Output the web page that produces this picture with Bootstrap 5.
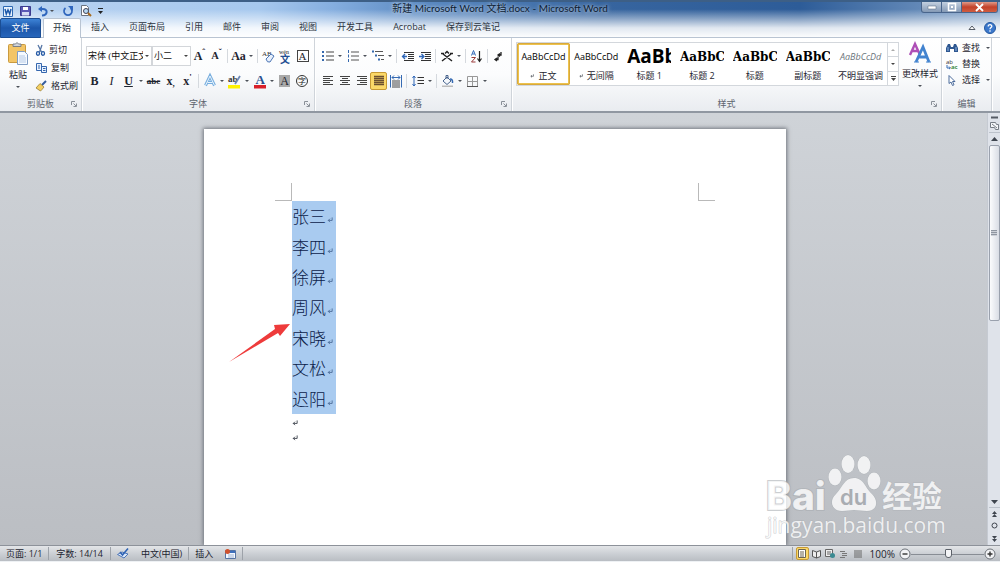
<!DOCTYPE html>
<html lang="zh-CN">
<head>
<meta charset="utf-8">
<meta name="viewport" content="width=device-width, initial-scale=1">
<title>新建 Microsoft Word 文档.docx - Microsoft Word</title>
<link href="https://cdn.jsdelivr.net/npm/bootstrap@5.3.0/dist/css/bootstrap.min.css" rel="stylesheet">
<style>
  body { font: 9px/12px "Open Sans", "Noto Sans CJK SC", sans-serif; color: #1e2530; }
  button { font: inherit; color: inherit; background: none; border: 0; padding: 0; line-height: 12px; white-space: nowrap; }
  svg { display: block; flex: none; overflow: visible; }
  .serif { font-family: "Liberation Serif", "Noto Sans CJK SC", serif; }

  /* title bar and tabs */
  .app-head { background: linear-gradient(#fff0 20%, #ffffff73 48%, #ffffffd9 72%, #fff), linear-gradient(90deg, #b9d3f1 0, #a6c8ee 26%, #86afe0 33%, #5b8ac2 42%, #37659f 60%, #2d5c98 80%, #86a6cc 100%); border-top: 2px solid #3d5f86; }
  .title-row { display: grid; grid-template-columns: 1fr auto 1fr; height: 16px; }
  .quick { padding-left: 3px; gap: 7px; }
  .doc-title { font: 10px/12px Lato, "Noto Sans CJK SC", sans-serif; color: #0e1d33; text-shadow: 0 0 5px #fff9, 0 0 3px #fff6; }
  .win-btns { height: 11px; margin-right: 2px; border: 1px solid #49658c; border-top: 0; border-radius: 0 0 3px 3px; overflow: hidden; background: linear-gradient(#c3d0e0, #8499b5); }
  .win-btns button { width: 20px; height: 10px; border-right: 1px solid #49658c; display: flex; align-items: center; justify-content: center; }
  .win-btns button.close-btn { width: 35px; border: 0; background: linear-gradient(#e09a88, #c3412a 50%, #cf5d41); }
  .tabs { height: 20px; border-bottom: 1px solid #b9c4d2; }
  .tab { padding: 3px 10px; color: #2c3440; text-decoration: none; white-space: nowrap; height: 20px; }
  .tab.file { width: 41px; margin-right: 2px; text-align: center; padding: 3px 0; color: #fff; background: linear-gradient(#3d83d6, #1c56a9 50%, #2766bb); border: 1px solid #1b4e94; border-radius: 2px 2px 0 0; }
  .tab.on { background: #fff; border: 1px solid #b9c4d2; border-bottom: 0; border-radius: 2px 2px 0 0; padding: 3px 9px; }

  /* ribbon */
  .ribbon { height: 75px; background: linear-gradient(#fff, #fbfcfd 50%, #e9ecf0); border-bottom: 2px solid #9097a1; }
  .group { border-right: 1px solid #cfd4da; box-shadow: 1px 0 #fff; display: flex; flex-direction: column; justify-content: space-between; }
  .group-name { position: relative; text-align: center; color: #5d646e; height: 13px; }
  .group-name svg { position: absolute; right: 4px; top: 3px; }
  .clip-list { display: flex; flex-direction: column; gap: 6px; padding-top: 2px; }
  .tool-rows { display: flex; flex-direction: column; gap: 5px; padding: 8px 0 0 4px; }
  .tool-row { display: flex; align-items: center; height: 20px; }
  .tool { width: 17px; height: 18px; display: flex; align-items: center; justify-content: center; flex: none; font-size: 12px; }
  .tool.on { background: #fbd868; border: 1px solid #c79a35; border-radius: 2px; }
  .drop { width: 8px; height: 18px; display: flex; align-items: center; justify-content: center; flex: none; }
  .drop.low { height: 12px; }
  .drop::after, .tri::after { content: ""; border: 2px solid transparent; border-top: 2px solid #4c5159; border-bottom: 0; }
  .tri { display: flex; justify-content: center; align-items: center; height: 4px; }
  .rule { width: 5px; height: 14px; flex: none; background: linear-gradient(#d5d9de, #d5d9de) 2px 0 / 1px 100% no-repeat; }
  .combo { appearance: none; height: 20px; border: 1px solid #d3d6da; border-radius: 0; padding: 0 8px 0 1px; font-size: 9px; color: #111; line-height: 18px;
    background: #fff url("data:image/svg+xml,%3Csvg xmlns='http://www.w3.org/2000/svg' width='4' height='2'%3E%3Cpath d='M0 0h4L2 2z' fill='%23444'/%3E%3C/svg%3E") right 2px center no-repeat; }
  .boxed { border: 1px solid #444; width: 12px; height: 12px; line-height: 10px; font-size: 11px; text-align: center; }
  .shade { background: #a9a9a9; width: 11px; line-height: 12px; text-align: center; }
  .gallery { height: 44px; border: 1px solid #d3d7dc; background: #fff; }
  .style-item { flex: 1 1 0; min-width: 0; overflow: hidden; display: flex; flex-direction: column; align-items: center; justify-content: space-between; padding: 4px 3px 3px; }
  .style-item.on { border: 2px solid #ecc24e; outline: 1px solid #d9a93a; outline-offset: -1px; border-radius: 2px; padding: 2px 1px 1px; }
  .sample { font-size: 9px; line-height: 20px; height: 20px; width: 46px; white-space: nowrap; text-align: center; color: #000; }
  .sample.cut { text-align: left; width: 44px; overflow: hidden; }
  .sample.big { font: bold 19px/19px "Open Sans", sans-serif; }
  .sample.mid { font: bold 12px/21px "DejaVu Serif", serif; }
  .scroller { width: 11px; border-left: 1px solid #d3d7dc; }
  .scroller button { flex: 1; border-bottom: 1px solid #d3d7dc; display: flex; align-items: center; justify-content: center; }

  /* document area */
  .desk { background: linear-gradient(#cfd3d8, #bbbec3); min-height: 0; overflow: hidden; }
  .paper { width: 582px; margin-left: 3px; background: #fff; box-shadow: 0 0 4px 1px #70757d; padding: 54px 71px 0; }
  .corner { width: 17px; height: 18px; border: 0 solid #b9b9b9; border-bottom-width: 1px; }
  .corner.tl { border-right-width: 1px; }
  .corner.tr { border-left-width: 1px; }
  .names { width: 44px; height: 213px; margin-left: 17px; background: #a9cbf0; color: #0b2149; font: 17px/30px "Noto Sans CJK SC", sans-serif; font-weight: 300; }
  .names p, .blank { margin: 0; display: flex; align-items: center; gap: 1px; }
  .names p { flex: 1; }
  .names svg { color: #3f5f8c; }
  .blank { height: 15px; margin-left: 17px; padding-top: 3px; }
  .pointer { position: absolute; left: 24px; top: 195px; }
  .watermark { position: absolute; right: 41px; bottom: 2px; width: 180px; }
  .vbar { width: 13px; background: #dfe3ea; border-left: 1px solid #c5cad2; }
  .thumb { height: 176px; width: 11px; border: 1px solid #9aa1ad; border-radius: 2px; background: linear-gradient(90deg, #fbfcfd, #d9dde5); }
  .grip { width: 6px; height: 6px; background: repeating-linear-gradient(#8f96a1 0 1px, #cdd1d8 1px 2px); }

  /* status bar */
  .status { height: 17px; background: linear-gradient(#e3e5e8, #c8ccd1 60%, #b9bdc3); border-top: 1px solid #8d929a; border-bottom: 1px solid #eef1f4; }
  .cell { padding: 0 6px; height: 13px; line-height: 13px; border-right: 1px solid #9da2a9; display: flex; align-items: center; }
  .cell.count { padding: 0 7px; }
  .views { border-left: 1px solid #9da2a9; padding: 0 1px 0 3px; gap: 1px; }
  .view { width: 13px; height: 13px; display: flex; align-items: center; justify-content: center; }
  .view.on { background: #fbd868; border: 1px solid #c79a35; border-radius: 2px; }
  .zoom { appearance: none; width: 73px; height: 12px; margin: 0; background: linear-gradient(#888d94, #888d94) 0 6px / 100% 1px no-repeat; }
  .zoom::-webkit-slider-thumb { appearance: none; width: 7px; height: 9px; background: #f3f4f6; border: 1px solid #5c6169; border-radius: 1px 1px 3px 3px; }
</style>
</head>
<body class="vh-100 d-flex flex-column overflow-hidden">

<svg width="0" height="0" class="position-absolute" aria-hidden="true">
  <symbol id="launch" viewBox="0 0 6 6"><path d="M.5 4V.5H4M2.500 2.500 5 5M5.500 2.500v3h-3" fill="none" stroke="#8a9098"/></symbol>
  <symbol id="ret" viewBox="0 0 7 7"><path d="M6 .5v3.500H1.500M3.500 2 1.500 4l2 2" fill="none" stroke="currentColor" stroke-width=".9"/></symbol>
  <symbol id="list" viewBox="0 0 12 12"><path d="M4 2h8M4 6h8M4 10h8" stroke="#444"/><path d="M0 2h2M0 6h2M0 10h2" stroke="#3568ad" stroke-width="2"/></symbol>
  <symbol id="left" viewBox="0 0 12 12"><path d="M1 1.500h10M1 3.500h7M1 5.500h10M1 7.500h7M1 9.500h10" stroke="#444"/></symbol>
  <symbol id="center" viewBox="0 0 12 12"><path d="M1 1.500h10M3 3.500h6M1 5.500h10M3 7.500h6M1 9.500h10" stroke="#444"/></symbol>
  <symbol id="right" viewBox="0 0 12 12"><path d="M1 1.500h10M4 3.500h7M1 5.500h10M4 7.500h7M1 9.500h10" stroke="#444"/></symbol>
  <symbol id="full" viewBox="0 0 12 12"><path d="M1 1.500h10M1 3.500h10M1 5.500h10M1 7.500h10M1 9.500h10" stroke="#6b4f30" stroke-width="1.600"/></symbol>
</svg>

<header class="app-head flex-shrink-0">
  <div class="title-row">
    <div class="d-flex align-items-center quick">
      <svg width="10" height="11" viewBox="0 0 10 11"><path d="M.5.500h9v10h-9z" fill="#e9f2fc" stroke="#2e69b3"/><path d="m2 3 1.300 5L5 4l1.700 4L8 3" fill="none" stroke="#1c58aa" stroke-width="1.500"/></svg>
      <button title="保存"><svg width="11" height="10" viewBox="0 0 11 10"><path d="M.5.500h10v9h-10z" fill="#5b59b5" stroke="#3c3b8d"/><path d="M3 1h5v3H3z" fill="#fff"/><path d="M2 6h7v3.500H2z" fill="#d4dcf4"/></svg></button>
      <button title="撤消" class="d-flex align-items-center"><svg width="10" height="10" viewBox="0 0 10 10"><path d="M4 9.500C10 9 10 3 5 3H2" fill="none" stroke="#2f66bd" stroke-width="2"/><path d="M4 0v6L0 3z" fill="#2f66bd"/></svg><span class="drop"></span></button>
      <button title="重复"><svg width="10" height="10" viewBox="0 0 10 10"><path d="M2.500 2a4 4 0 1 0 5 0" fill="none" stroke="#2f66bd" stroke-width="1.700"/><path d="M5 0h5v5z" fill="#2f66bd"/></svg></button>
      <button title="打印预览"><svg width="11" height="12" viewBox="0 0 11 12"><path d="M1.500.500h5l2 2v8h-7z" fill="#fff" stroke="#6b7480"/><circle cx="6" cy="6" r="2.500" fill="#b8daf6" stroke="#445"/><path d="m8 8 3 3" stroke="#a76a1d" stroke-width="2"/></svg></button>
      <button title="自定义"><svg width="5" height="6" viewBox="0 0 5 6"><path d="M0 .5h5" stroke="#222"/><path d="M0 3h5L2.500 6z" fill="#222"/></svg></button>
    </div>
    <div class="doc-title">新建 Microsoft Word 文档.docx - Microsoft Word</div>
    <div class="d-flex justify-content-end align-items-start">
      <div class="win-btns d-flex">
        <button title="最小化"><svg width="8" height="3"><path d="M0 0h8v3H0z" fill="#fff" stroke="#53647c" stroke-width=".5"/></svg></button>
        <button title="还原"><svg width="8" height="8"><path d="M.5.500h7v7h-7z" fill="none" stroke="#fff" stroke-width="1.500"/><path d="M3 3h2v2H3z" fill="#fff"/></svg></button>
        <button title="关闭" class="close-btn"><svg width="7" height="7"><path d="m0 0 7 7M7 0 0 7" stroke="#fff" stroke-width="1.800"/></svg></button>
      </div>
    </div>
  </div>
  <nav class="tabs d-flex">
    <a href="#" class="tab file">文件</a><a href="#" class="tab on">开始</a><a href="#" class="tab">插入</a><a href="#" class="tab">页面布局</a><a href="#" class="tab">引用</a><a href="#" class="tab">邮件</a><a href="#" class="tab">审阅</a><a href="#" class="tab">视图</a><a href="#" class="tab">开发工具</a><a href="#" class="tab">Acrobat</a><a href="#" class="tab">保存到云笔记</a>
    <div class="ms-auto d-flex align-items-center gap-2 pe-1">
      <button title="折叠功能区"><svg width="8" height="6"><path d="M1 4.500 4 1l3 3.500z" fill="#fff" stroke="#555c66"/></svg></button>
      <button title="帮助"><svg width="12" height="12"><circle cx="6" cy="6" r="5.500" fill="#3b78cc" stroke="#2458a0"/><path d="M4.200 4.500c0-2.500 3.800-2.300 3.600 0C7.700 5.600 6 5.700 6 7.300M6 8.300v1.400" fill="none" stroke="#fff" stroke-width="1.300"/></svg></button>
    </div>
  </nav>
</header>

<div class="ribbon d-flex flex-shrink-0">
  <section class="group" style="width:82px">
    <div class="d-flex ps-1 pt-1 gap-2">
      <button class="d-flex flex-column align-items-center ps-1 gap-1">
        <svg width="20" height="23" viewBox="0 0 20 23"><rect x=".5" y="2.500" width="17" height="18" rx="1" fill="#f3c566" stroke="#c99a3f"/><path d="M5 4.500V2h2.500q1.500-3 3 0H13v2.500z" fill="#cfd3d9" stroke="#7a8088"/><path d="M9.500 9.500h7l3 3v10h-10z" fill="#f6faff" stroke="#7f9cc4"/><path d="M11 14h6M11 16h7M11 18h7M11 20h7" stroke="#b4c9e6"/></svg>
        <span>粘贴</span><span class="tri"></span>
      </button>
      <div class="clip-list">
        <button class="d-flex align-items-center gap-1"><svg width="9" height="11" viewBox="0 0 9 11"><path d="m2 0 3.500 7M6 0 3.500 7" stroke="#5676a5" stroke-width="1.300"/><ellipse cx="2" cy="8.500" rx="1.500" ry="1.800" fill="none" stroke="#2257a4" stroke-width="1.300"/><ellipse cx="7" cy="8.500" rx="1.500" ry="1.800" fill="none" stroke="#2257a4" stroke-width="1.300"/></svg><span>剪切</span></button>
        <button class="d-flex align-items-center gap-1"><svg width="11" height="10" viewBox="0 0 11 10"><path d="M.5.500h5v7h-5zM5.500 3.500h5v6h-5z" fill="#eaf3ff" stroke="#3567ae"/><path d="M2 3h2M2 5h2M7 5.500h2.500M7 7.500h2.500" stroke="#3567ae"/></svg><span>复制</span></button>
        <button class="d-flex align-items-center gap-1"><svg width="11" height="10" viewBox="0 0 11 10"><path d="m10 0-4 4" stroke="#355d9c" stroke-width="2"/><path d="M4 2.500 8 6 6 8.500 4.500 10 0 7z" fill="#f4cf62" stroke="#8b7128" stroke-width=".7"/></svg><span>格式刷</span></button>
      </div>
    </div>
    <div class="group-name">剪贴板<svg width="6" height="6"><use href="#launch"/></svg></div>
  </section>

  <section class="group" style="width:233px">
    <div class="tool-rows">
      <div class="tool-row serif">
        <select class="combo" style="width:66px" aria-label="字体"><option>宋体 (中文正文)</option></select>
        <select class="combo" style="width:39px" aria-label="字号"><option>小二</option></select>
        <button class="tool fw-bold">A<sup>ˆ</sup></button>
        <button class="tool fw-bold"><small>A</small><sup>ˇ</sup></button>
        <span class="rule"></span>
        <button class="tool fw-bold">Aa</button><button class="drop" aria-label="更改大小写选项"></button>
        <span class="rule"></span>
        <button class="tool" title="清除格式"><svg width="13" height="13" viewBox="0 0 13 13"><text x="0" y="6" font-size="7" fill="#333">AB</text><path d="m4 9 5-5 3 2-4 6q-3 1-4-3z" fill="#e8f0fc" stroke="#4d76b5"/></svg></button>
        <button class="tool" title="拼音指南"><svg width="13" height="13" viewBox="0 0 13 13"><text x="0" y="4" font-size="6" fill="#222">wén</text><text x="1" y="13" font-size="10" fill="#234f92" font-weight="bold">文</text></svg></button>
        <button class="tool"><span class="boxed">A</span></button>
      </div>
      <div class="tool-row serif">
        <button class="tool fw-bold">B</button><button class="tool fst-italic">I</button><button class="tool fw-bold text-decoration-underline">U</button><button class="drop" aria-label="下划线选项"></button>
        <button class="tool fw-bold text-decoration-line-through" style="font-size:9px">abc</button>
        <button class="tool fw-bold">x<sub>,</sub></button><button class="tool fw-bold">x<sup>'</sup></button>
        <span class="rule"></span>
        <button class="tool" title="文本效果"><svg width="12" height="12" viewBox="0 0 12 12"><path d="M1.500 10.500 6 1l4.500 9.500M3.500 7.500h5" fill="none" stroke="#78aede" stroke-width="3"/><path d="M1.500 10.500 6 1l4.500 9.500M3.500 7.500h5" fill="none" stroke="#e9f5ff"/></svg></button><button class="drop" aria-label="文本效果选项"></button>
        <button class="tool" title="突出显示"><svg width="13" height="13" viewBox="0 0 13 13"><path d="M0 10h12v3.500H0z" fill="#fff200"/><text x="0" y="7" font-size="9" font-weight="bold" fill="#333">ab</text><path d="m12 1-5 8" stroke="#6b88b5" stroke-width="1.800"/></svg></button><button class="drop" aria-label="突出显示选项"></button>
        <button class="tool" title="字体颜色"><svg width="12" height="13" viewBox="0 0 12 13"><path d="M0 10h12v3.500H0z" fill="#d8202a"/><text x="1.500" y="9" font-size="13" font-weight="bold" fill="#28508f">A</text></svg></button><button class="drop" aria-label="字体颜色选项"></button>
        <button class="tool"><span class="shade">A</span></button>
        <button class="tool" title="带圈字符"><svg width="12" height="12" viewBox="0 0 12 12"><circle cx="6" cy="6" r="5.500" fill="none" stroke="#333"/><text x="2" y="9" font-size="8" fill="#222">字</text></svg></button>
      </div>
    </div>
    <div class="group-name">字体<svg width="6" height="6"><use href="#launch"/></svg></div>
  </section>

  <section class="group" style="width:197px">
    <div class="tool-rows">
      <div class="tool-row">
        <button class="tool" title="项目符号"><svg width="12" height="12"><use href="#list"/></svg></button><button class="drop" aria-label="项目符号选项"></button>
        <button class="tool" title="编号"><svg width="12" height="12" viewBox="0 0 12 12"><path d="M4 2h8M4 6h8M4 10h8" stroke="#555"/><path d="M1.500 0v3M1.500 4.500v3M1.500 9v3" stroke="#3568ad"/></svg></button><button class="drop" aria-label="编号选项"></button>
        <button class="tool" title="多级列表"><svg width="12" height="12" viewBox="0 0 12 12"><path d="M3 1.500h8M6 5.500h6M9 9.500h3" stroke="#555"/><path d="M0 1.500h2M3 5.500h2M6 9.500h2" stroke="#3568ad" stroke-width="2"/></svg></button><button class="drop" aria-label="多级列表选项"></button>
        <span class="rule"></span>
        <button class="tool" title="减少缩进"><svg width="12" height="11" viewBox="0 0 12 11"><path d="M2 1.500h10M6 3.500h6M6 5.500h6M6 7.500h6M2 9.500h10" stroke="#333"/><path d="M5 5.500H1M3 3 .5 5.500 3 8" stroke="#2e66b7" fill="none" stroke-width="1.300"/></svg></button>
        <button class="tool" title="增加缩进"><svg width="12" height="11" viewBox="0 0 12 11"><path d="M2 1.500h10M6 3.500h6M6 5.500h6M6 7.500h6M2 9.500h10" stroke="#333"/><path d="M0 5.500h4M2.500 3 5 5.500 2.500 8" stroke="#2e66b7" fill="none" stroke-width="1.300"/></svg></button>
        <span class="rule"></span>
        <button class="tool" title="中文版式"><svg width="12" height="11" viewBox="0 0 12 11"><path d="M1 10 10 3M11 10 2 3M0 2.500h3M9 2.500h3M4 2.500 6 .5l2 2" stroke="#222" stroke-width="1.500" fill="none"/></svg></button><button class="drop" aria-label="中文版式选项"></button>
        <span class="rule"></span>
        <button class="tool" title="排序"><svg width="11" height="13" viewBox="0 0 11 13"><path d="m.5 5.500 2-5 2 5M1.500 4h2" stroke="#2e66b7" fill="none"/><path d="M.5 7.500h4l-4 4.500h4" stroke="#9b3a3a" fill="none"/><path d="M8.500 1v10M6.500 8.500l2 3 2-3" stroke="#222" fill="none" stroke-width="1.200"/></svg></button>
        <span class="rule"></span>
        <button class="tool" title="显示标记"><svg width="9" height="10" viewBox="0 0 9 10"><path d="M7 1v3H4M6 2.500 4 4l2 1.500M4 5.500v3H1M3 7 1 8.500 3 10" stroke="#222" fill="none" stroke-width="1.300"/></svg></button>
      </div>
      <div class="tool-row">
        <button class="tool" title="左对齐"><svg width="12" height="12"><use href="#left"/></svg></button>
        <button class="tool" title="居中"><svg width="12" height="12"><use href="#center"/></svg></button>
        <button class="tool" title="右对齐"><svg width="12" height="12"><use href="#right"/></svg></button>
        <button class="tool on" title="两端对齐"><svg width="12" height="12"><use href="#full"/></svg></button>
        <button class="tool" title="分散对齐"><svg width="12" height="13" viewBox="0 0 12 13"><path d="M.5 0v12.500M11.500 0v12.500M2 2.500h8M4 .5 2 2.500l2 2M8 .5l2 2-2 2" stroke="#356ab3" fill="none"/><path d="M2 6h8M2 8h8M2 10h8M2 12h8" stroke="#444"/></svg></button>
        <span class="rule"></span>
        <button class="tool" title="行距"><svg width="12" height="12" viewBox="0 0 12 12"><path d="M5.500 2.500H12M5.500 5.500H12M5.500 8.500H12" stroke="#333"/><path d="M2 1v10M.5 3 2 1l1.500 2M.5 9 2 11l1.500-2" stroke="#2e66b7" fill="none"/></svg></button><button class="drop" aria-label="行距选项"></button>
        <span class="rule"></span>
        <button class="tool" title="底纹"><svg width="13" height="12" viewBox="0 0 13 12"><path d="m2 6 4-4 4 4-4 3.500z" fill="#f5f8fc" stroke="#48648e"/><path d="M5 4V.5h2V4" fill="none" stroke="#48648e"/><path d="M9 4q3 0 2.500 4" stroke="#356ab3" fill="none" stroke-width="1.500"/><path d="M1 10.500h11v1.500H1z" fill="#bbb"/></svg></button><button class="drop" aria-label="底纹选项"></button>
        <button class="tool" title="边框"><svg width="11" height="11" viewBox="0 0 11 11"><path d="M.5.500h10v10H.5zM5.500.500v10M.5 5.500h10" fill="none" stroke="#999"/><path d="M0 10.500h11" stroke="#555"/></svg></button><button class="drop" aria-label="边框选项"></button>
      </div>
    </div>
    <div class="group-name">段落<svg width="6" height="6"><use href="#launch"/></svg></div>
  </section>

  <section class="group flex-fill">
    <div class="d-flex ps-1 pt-1">
      <div class="gallery d-flex flex-fill">
        <button class="style-item on"><span class="sample">AaBbCcDd</span><span class="d-flex align-items-center gap-1"><svg width="4" height="4"><use href="#ret"/></svg>正文</span></button>
        <button class="style-item"><span class="sample">AaBbCcDd</span><span class="d-flex align-items-center gap-1"><svg width="4" height="4"><use href="#ret"/></svg>无间隔</span></button>
        <button class="style-item"><span class="sample cut big">AaBb</span><span>标题 1</span></button>
        <button class="style-item"><span class="sample cut mid">AaBbC</span><span>标题 2</span></button>
        <button class="style-item"><span class="sample cut mid">AaBbC</span><span>标题</span></button>
        <button class="style-item"><span class="sample cut mid">AaBbC</span><span>副标题</span></button>
        <button class="style-item"><span class="sample fst-italic text-secondary">AaBbCcDd</span><span>不明显强调</span></button>
        <div class="scroller d-flex flex-column">
          <button title="上一行"><svg width="4" height="2"><path d="M0 2h4L2 0z" fill="#aaa"/></svg></button>
          <button title="下一行"><svg width="4" height="2"><path d="M0 0h4L2 2z" fill="#444"/></svg></button>
          <button title="其他" class="border-0"><svg width="5" height="5"><path d="M0 .5h5" stroke="#444"/><path d="M0 2h5L2.500 5z" fill="#444"/></svg></button>
        </div>
      </div>
      <button class="d-flex flex-column align-items-center gap-1" style="width:42px">
        <svg width="22" height="22" viewBox="0 0 22 22"><path d="m1 13 5-11 5 11M3 9h6" fill="none" stroke="#ae4fb6" stroke-width="2.400"/><path d="m7 20 7-15 6 15M9.500 15h8" fill="none" stroke="#4283cf" stroke-width="2.800"/><path d="M5 20h5M17 20h5" stroke="#4283cf"/></svg>
        <span>更改样式</span><span class="tri"></span>
      </button>
    </div>
    <div class="group-name">样式<svg width="6" height="6"><use href="#launch"/></svg></div>
  </section>

  <section class="group" style="width:50px">
    <div class="d-flex flex-column gap-1 ps-1 pt-1">
      <button class="d-flex align-items-center gap-1"><svg width="12" height="10" viewBox="0 0 12 10"><path d="M0 9V5l2-4h2l1 3h2l1-3h2l2 4v4H8V6H4v3z" fill="#2e5790"/><path d="M2 4v4M10 4v4" stroke="#8db4e3"/></svg><span>查找</span><span class="drop low"></span></button>
      <button class="d-flex align-items-center gap-1"><svg width="12" height="10" viewBox="0 0 12 10"><text x="0" y="5" font-size="6" fill="#333">ab</text><text x="5" y="10" font-size="6" font-weight="bold" fill="#3c8c46">ac</text><path d="M1 6v3h3M3 7.500 4.500 9 3 10" fill="none" stroke="#356ab3"/></svg><span>替换</span></button>
      <button class="d-flex align-items-center gap-1"><svg width="12" height="11" viewBox="0 0 12 11"><path d="M3 .5v8l2-1.500 1.500 3.500 1.500-.7L6.500 6.500H9z" fill="#fff" stroke="#4c6c9c"/></svg><span>选择</span><span class="drop low"></span></button>
    </div>
    <div class="group-name">编辑</div>
  </section>
  <div style="width:8px"></div>
</div>

<main class="flex-fill d-flex desk">
  <div class="flex-fill d-flex justify-content-center position-relative pt-3">
    <article class="paper position-relative">
      <div class="d-flex justify-content-between">
        <span class="corner tl"></span>
        <span class="corner tr"></span>
      </div>
      <div class="names d-flex flex-column">
        <p>张三<svg width="6" height="6" class="mt-2"><use href="#ret"/></svg></p>
        <p>李四<svg width="6" height="6" class="mt-2"><use href="#ret"/></svg></p>
        <p>徐屏<svg width="6" height="6" class="mt-2"><use href="#ret"/></svg></p>
        <p>周风<svg width="6" height="6" class="mt-2"><use href="#ret"/></svg></p>
        <p>宋晓<svg width="6" height="6" class="mt-2"><use href="#ret"/></svg></p>
        <p>文松<svg width="6" height="6" class="mt-2"><use href="#ret"/></svg></p>
        <p>迟阳<svg width="6" height="6" class="mt-2"><use href="#ret"/></svg></p>
      </div>
      <p class="blank"><svg width="6" height="6"><use href="#ret"/></svg></p>
      <p class="blank"><svg width="6" height="6"><use href="#ret"/></svg></p>
      <svg class="pointer" width="63" height="39" viewBox="0 0 63 39"><path d="M1 38 47 5l-1-4 16-1-10 12-2-3z" fill="#ee3b3b"/></svg>
    </article>

    <svg class="watermark" height="90" viewBox="0 0 180 90" fill="#fff" fill-opacity=".78" stroke="#a9adb2" stroke-opacity=".6" stroke-width="1" paint-order="stroke">
      <text x="0" y="57" font-family="Inter, sans-serif" font-weight="800" font-size="39" stroke-width="2">Bai</text>
      <ellipse cx="69" cy="24" rx="6.500" ry="8.500"/><ellipse cx="82" cy="11" rx="6.500" ry="9"/><ellipse cx="98" cy="12" rx="6.500" ry="9"/><ellipse cx="108" cy="28" rx="6.500" ry="8.500"/>
      <path d="M88 25c10 0 11 10 18 16 7 7 5 17-5 17-5 0-9-1-13-1s-7 1-12 1c-11 0-13-11-6-17 7-7 8-16 18-16z"/>
      <text x="74" y="52" font-family="Inter, sans-serif" font-weight="600" font-size="22" fill="#a9adb2" fill-opacity="1" stroke="none">du</text>
      <text x="116" y="54" font-family="Noto Sans CJK SC, sans-serif" font-weight="700" font-size="30">经验</text>
      <text x="1" y="80" font-family="Open Sans, sans-serif" font-size="21" stroke-width="1">jingyan.baidu.com</text>
    </svg>
  </div>
  <aside class="vbar d-flex flex-column align-items-center flex-shrink-0">
    <svg width="11" height="32" viewBox="0 0 11 32"><path d="M2 4.500h7" stroke="#555b64" stroke-width="2"/><path d="M1.500 9.500h5l1 2h2v5h-3l-1-2h-4zM3 11l5 4" fill="#f4f6f9" stroke="#777d86"/><path d="M0 19.500h11" stroke="#bcc2cb"/><path d="M2 28h7l-3.500-4z" fill="#3f454f"/></svg>
    <div class="thumb d-flex align-items-center justify-content-center"><span class="grip"></span></div>
    <svg class="mt-auto" width="11" height="49" viewBox="0 0 11 49"><path d="M2 4h7L5.500 8z" fill="#3f454f"/><path d="M0 11.500h11" stroke="#bcc2cb"/><path d="M3 18h5l-2.500-3zM3 21h5l-2.500-3zM3 40h5l-2.500 3zM3 43h5l-2.500 3z" fill="#3f454f"/><circle cx="5.500" cy="29.500" r="2.500" fill="none" stroke="#3f454f"/></svg>
  </aside>
</main>

<footer class="status d-flex align-items-center flex-shrink-0">
  <span class="cell">页面: 1/1</span>
  <span class="cell count">字数: 14/14</span>
  <span class="cell border-0"><svg width="12" height="11" viewBox="0 0 12 11"><path d="M.5 6.500 5 4l6 2-4 4z" fill="#dbe8fa" stroke="#4c76b8"/><path d="m3 4 2.500 3L11 .5" fill="none" stroke="#2f63b4" stroke-width="1.600"/></svg></span>
  <span class="cell">中文(中国)</span>
  <span class="cell border-0">插入</span>
  <span class="cell"><svg width="11" height="10" viewBox="0 0 11 10"><path d="M.5 1.500h10v8H.5z" fill="#f4f8ff" stroke="#5673a3"/><path d="M1 2h9v2H1z" fill="#3d6fbc"/><path d="M3 6h6M3 8h6" stroke="#9fb4d4"/><circle cx="2.500" cy="2.500" r="2.500" fill="#d0512c"/></svg></span>
  <div class="ms-auto d-flex align-items-center">
    <div class="views d-flex me-1">
      <button class="view on" title="页面视图"><svg width="8" height="9"><path d="M.5.500h7v8h-7zM2 3h4M2 5h4M2 7h4" fill="#fff" stroke="#6d6550"/></svg></button>
      <button class="view" title="阅读版式"><svg width="9" height="8"><path d="M.5.500 4.500 2l4-1.500v6L4.500 8l-4-1.500zM4.500 2v6" fill="#eee" stroke="#555"/></svg></button>
      <button class="view" title="Web 版式"><svg width="10" height="9"><path d="M.5.500h7v7h-7zM2 3h4M2 5h4" fill="#eee" stroke="#666"/><circle cx="7.500" cy="6.500" r="2.500" fill="#3a8a92"/></svg></button>
      <button class="view" title="大纲"><svg width="8" height="8"><path d="M0 1.500h5M2 3.500h5M2 5.500h5M0 7.500h5" stroke="#777"/></svg></button>
      <button class="view" title="草稿"><svg width="8" height="8"><path d="M0 1h8M0 3h8M0 5h8M0 7h8" stroke="#666"/></svg></button>
    </div>
    <span class="pe-1" style="font-size:10px">100%</span>
    <button title="缩小"><svg width="12" height="12"><circle cx="6" cy="6" r="5" fill="#f2f3f5" stroke="#6c7178"/><path d="M3.500 6h5" stroke="#333" stroke-width="1.400"/></svg></button>
    <input type="range" class="zoom" min="10" max="190" value="104" aria-label="显示比例">
    <button title="放大" class="pe-1"><svg width="12" height="12"><circle cx="6" cy="6" r="5" fill="#f2f3f5" stroke="#6c7178"/><path d="M3.500 6h5M6 3.500v5" stroke="#333" stroke-width="1.400"/></svg></button>
  </div>
</footer>

<script src="https://cdn.jsdelivr.net/npm/bootstrap@5.3.0/dist/js/bootstrap.bundle.min.js"></script>
</body>
</html>
